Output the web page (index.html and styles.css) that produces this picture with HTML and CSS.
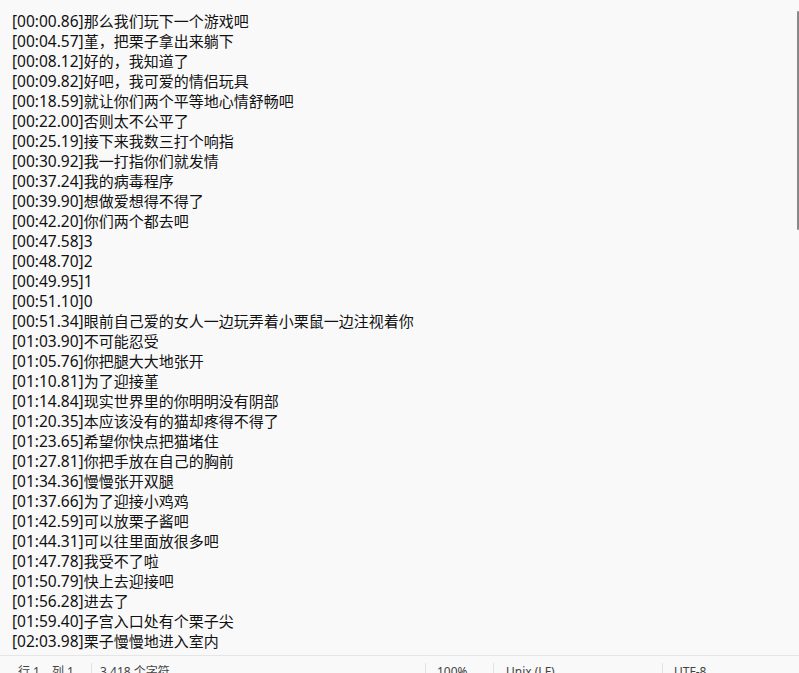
FILE: index.html
```html
<!DOCTYPE html>
<html lang="zh-CN">
<head>
<meta charset="utf-8">
<title>Notepad</title>
<link rel="stylesheet" href="styles.css">
</head>
<body>
<div class="window">
  <div class="editor">
    <div class="l"><span class="t">[00:00.86]</span>那么我们玩下一个游戏吧</div>
    <div class="l"><span class="t">[00:04.57]</span>堇，把栗子拿出来躺下</div>
    <div class="l"><span class="t">[00:08.12]</span>好的，我知道了</div>
    <div class="l"><span class="t">[00:09.82]</span>好吧，我可爱的情侣玩具</div>
    <div class="l"><span class="t">[00:18.59]</span>就让你们两个平等地心情舒畅吧</div>
    <div class="l"><span class="t">[00:22.00]</span>否则太不公平了</div>
    <div class="l"><span class="t">[00:25.19]</span>接下来我数三打个响指</div>
    <div class="l"><span class="t">[00:30.92]</span>我一打指你们就发情</div>
    <div class="l"><span class="t">[00:37.24]</span>我的病毒程序</div>
    <div class="l"><span class="t">[00:39.90]</span>想做爱想得不得了</div>
    <div class="l"><span class="t">[00:42.20]</span>你们两个都去吧</div>
    <div class="l"><span class="t">[00:47.58]3</span></div>
    <div class="l"><span class="t">[00:48.70]2</span></div>
    <div class="l"><span class="t">[00:49.95]1</span></div>
    <div class="l"><span class="t">[00:51.10]0</span></div>
    <div class="l"><span class="t">[00:51.34]</span>眼前自己爱的女人一边玩弄着小栗鼠一边注视着你</div>
    <div class="l"><span class="t">[01:03.90]</span>不可能忍受</div>
    <div class="l"><span class="t">[01:05.76]</span>你把腿大大地张开</div>
    <div class="l"><span class="t">[01:10.81]</span>为了迎接堇</div>
    <div class="l"><span class="t">[01:14.84]</span>现实世界里的你明明没有阴部</div>
    <div class="l"><span class="t">[01:20.35]</span>本应该没有的猫却疼得不得了</div>
    <div class="l"><span class="t">[01:23.65]</span>希望你快点把猫堵住</div>
    <div class="l"><span class="t">[01:27.81]</span>你把手放在自己的胸前</div>
    <div class="l"><span class="t">[01:34.36]</span>慢慢张开双腿</div>
    <div class="l"><span class="t">[01:37.66]</span>为了迎接小鸡鸡</div>
    <div class="l"><span class="t">[01:42.59]</span>可以放栗子酱吧</div>
    <div class="l"><span class="t">[01:44.31]</span>可以往里面放很多吧</div>
    <div class="l"><span class="t">[01:47.78]</span>我受不了啦</div>
    <div class="l"><span class="t">[01:50.79]</span>快上去迎接吧</div>
    <div class="l"><span class="t">[01:56.28]</span>进去了</div>
    <div class="l"><span class="t">[01:59.40]</span>子宫入口处有个栗子尖</div>
    <div class="l"><span class="t">[02:03.98]</span>栗子慢慢地进入室内</div>
    <div class="thumb"></div>
  </div>
  <div class="status">
    <div class="cell c1">行 1，列 1</div>
    <div class="cell c2">3,418 个字符</div>
    <div class="cell c3">100%</div>
    <div class="cell c4">Unix (LF)</div>
    <div class="cell c5">UTF-8</div>
  </div>
</div>
</body>
</html>
```

FILE: styles.css
```css
html, body {
  margin: 0;
  padding: 0;
  background: #f9f9f9;
}

.window {
  width: 799px;
  height: 673px;
  display: flex;
  flex-direction: column;
  overflow: hidden;
  background: #f9f9f9;
}

.editor {
  position: relative;
  height: 655px;
  flex: none;
  box-sizing: border-box;
  padding: 11px 0 0 12px;
  overflow: hidden;
  font-family: "Noto Sans CJK SC", "Noto Sans", sans-serif;
  font-size: 15px;
  color: #111;
}

.l {
  height: 20px;
  line-height: 20px;
  white-space: nowrap;
}

.t {
  font-family: "Noto Sans", "Noto Sans CJK SC", sans-serif;
  font-size: 15.5px;
}

.thumb {
  position: absolute;
  right: 0;
  top: 11px;
  width: 2px;
  height: 219px;
  background: #898989;
  border-radius: 1px;
}

.status {
  flex: none;
  height: 17px;
  border-top: 1px solid #e5e5e5;
  display: flex;
  align-items: flex-start;
  overflow: hidden;
  font-family: "Noto Sans", "Noto Sans CJK SC", sans-serif;
  font-size: 12px;
  color: #444;
}

.cell {
  box-sizing: border-box;
  margin-top: 7px;
  height: 20px;
  line-height: 18px;
  white-space: nowrap;
  border-left: 1px solid #e2e2e2;
}

.c1 { width: 91px; padding-left: 18px; border-left: none; }
.c2 { width: 334px; padding-left: 8px; }
.c3 { width: 68px; padding-left: 11px; }
.c4 { width: 169px; padding-left: 12px; }
.c5 { flex: 1; padding-left: 11px; }
```
